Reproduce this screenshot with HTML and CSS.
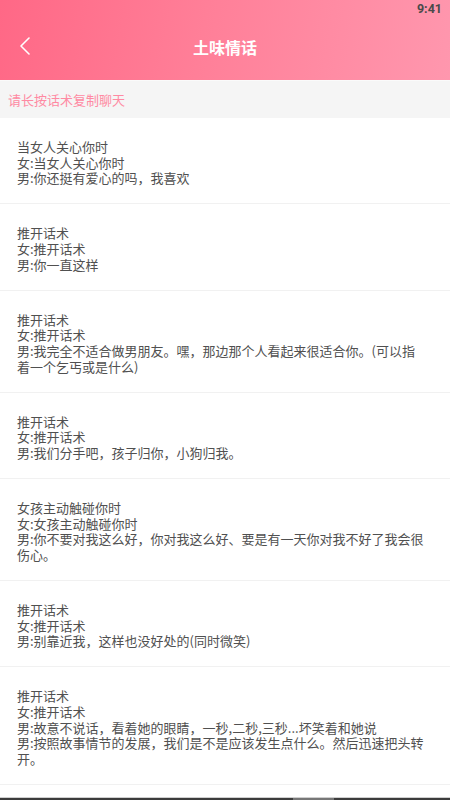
FILE: index.html
```html
<!DOCTYPE html>
<html lang="zh">
<head>
<meta charset="utf-8">
<link rel="stylesheet" href="styles.css">
</head>
<body>
<div class="page">
  <header class="header">
    <div class="status"><span class="time">9:41</span></div>
    <div class="nav">
      <span class="back">
        <svg width="12" height="18" viewBox="0 0 12 18"><path d="M10 1 L2 9 L10 17" fill="none" stroke="#fff" stroke-width="1.6" stroke-linecap="round" stroke-linejoin="round"/></svg>
      </span>
      <h1 class="title">土味情话</h1>
    </div>
  </header>
  <div class="tip">请长按话术复制聊天</div>
  <ul class="list">
    <li class="item">当女人关心你时<br>女:当女人关心你时<br>男:你还挺有爱心的吗，我喜欢</li>
    <li class="item">推开话术<br>女:推开话术<br>男:你一直这样</li>
    <li class="item">推开话术<br>女:推开话术<br>男:我完全不适合做男朋友。嘿，那边那个人看起来很适合你。(可以指着一个乞丐或是什么)</li>
    <li class="item">推开话术<br>女:推开话术<br>男:我们分手吧，孩子归你，小狗归我。</li>
    <li class="item">女孩主动触碰你时<br>女:女孩主动触碰你时<br>男:你不要对我这么好，你对我这么好、要是有一天你对我不好了我会很伤心。</li>
    <li class="item">推开话术<br>女:推开话术<br>男:别靠近我，这样也没好处的(同时微笑)</li>
    <li class="item">推开话术<br>女:推开话术<br>男:故意不说话，看着她的眼睛，一秒,二秒,三秒...坏笑着和她说<br>男:按照故事情节的发展，我们是不是应该发生点什么。然后迅速把头转开。</li>
  </ul>
  <div class="sysbar"><span class="thumb"></span></div>
</div>
</body>
</html>
```

FILE: styles.css
```css
* { box-sizing: border-box; }
html, body { margin: 0; padding: 0; }
body {
  width: 450px;
  height: 800px;
  overflow: hidden;
  background: #fff;
  font-family: "Noto Sans CJK SC", "Noto Sans", sans-serif;
}
.page { position: relative; width: 450px; height: 800px; overflow: hidden; }
.header {
  height: 80px;
  background: linear-gradient(100deg, #ff6886 0%, #ff7f98 45%, #ff97ae 100%);
  display: flex;
  flex-direction: column;
}
.status {
  height: 17px;
  display: flex;
  justify-content: flex-end;
  align-items: center;
  padding-right: 8px;
}
.time {
  font-family: "Roboto", "Liberation Sans", sans-serif;
  font-weight: 700;
  font-size: 12.5px;
  color: #4a4a4a;
}
.nav {
  position: relative;
  height: 60px;
  display: flex;
  align-items: center;
  justify-content: center;
}
.back {
  position: absolute;
  left: 19px;
  top: 20px;
  width: 12px;
  height: 18px;
  display: flex;
}
.title {
  margin: 0;
  font-size: 16px;
  font-weight: 700;
  color: #fff;
  line-height: 20px;
  margin-top: -1px;
}
.tip {
  height: 38px;
  background: #f5f5f5;
  border-top: 1px solid #fafafa;
  padding-left: 8px;
  display: flex;
  align-items: center;
  font-size: 13px;
  color: #ff8aa3;
}
.list { list-style: none; margin: 0; padding: 0; }
.item {
  padding: 21px 23px 17.6px 17px;
  border-bottom: 1px solid #f1f1f1;
  font-size: 13px;
  line-height: 15.6px;
  color: #505050;
}
.sysbar {
  position: absolute;
  left: 0;
  right: 0;
  bottom: 0;
  height: 3px;
  background: #3c3c3c;
  border-top: 1px solid #cfcfcf;
}
.thumb {
  position: absolute;
  left: 293px;
  top: 0;
  width: 41px;
  height: 2px;
  background: #777;
}
```
